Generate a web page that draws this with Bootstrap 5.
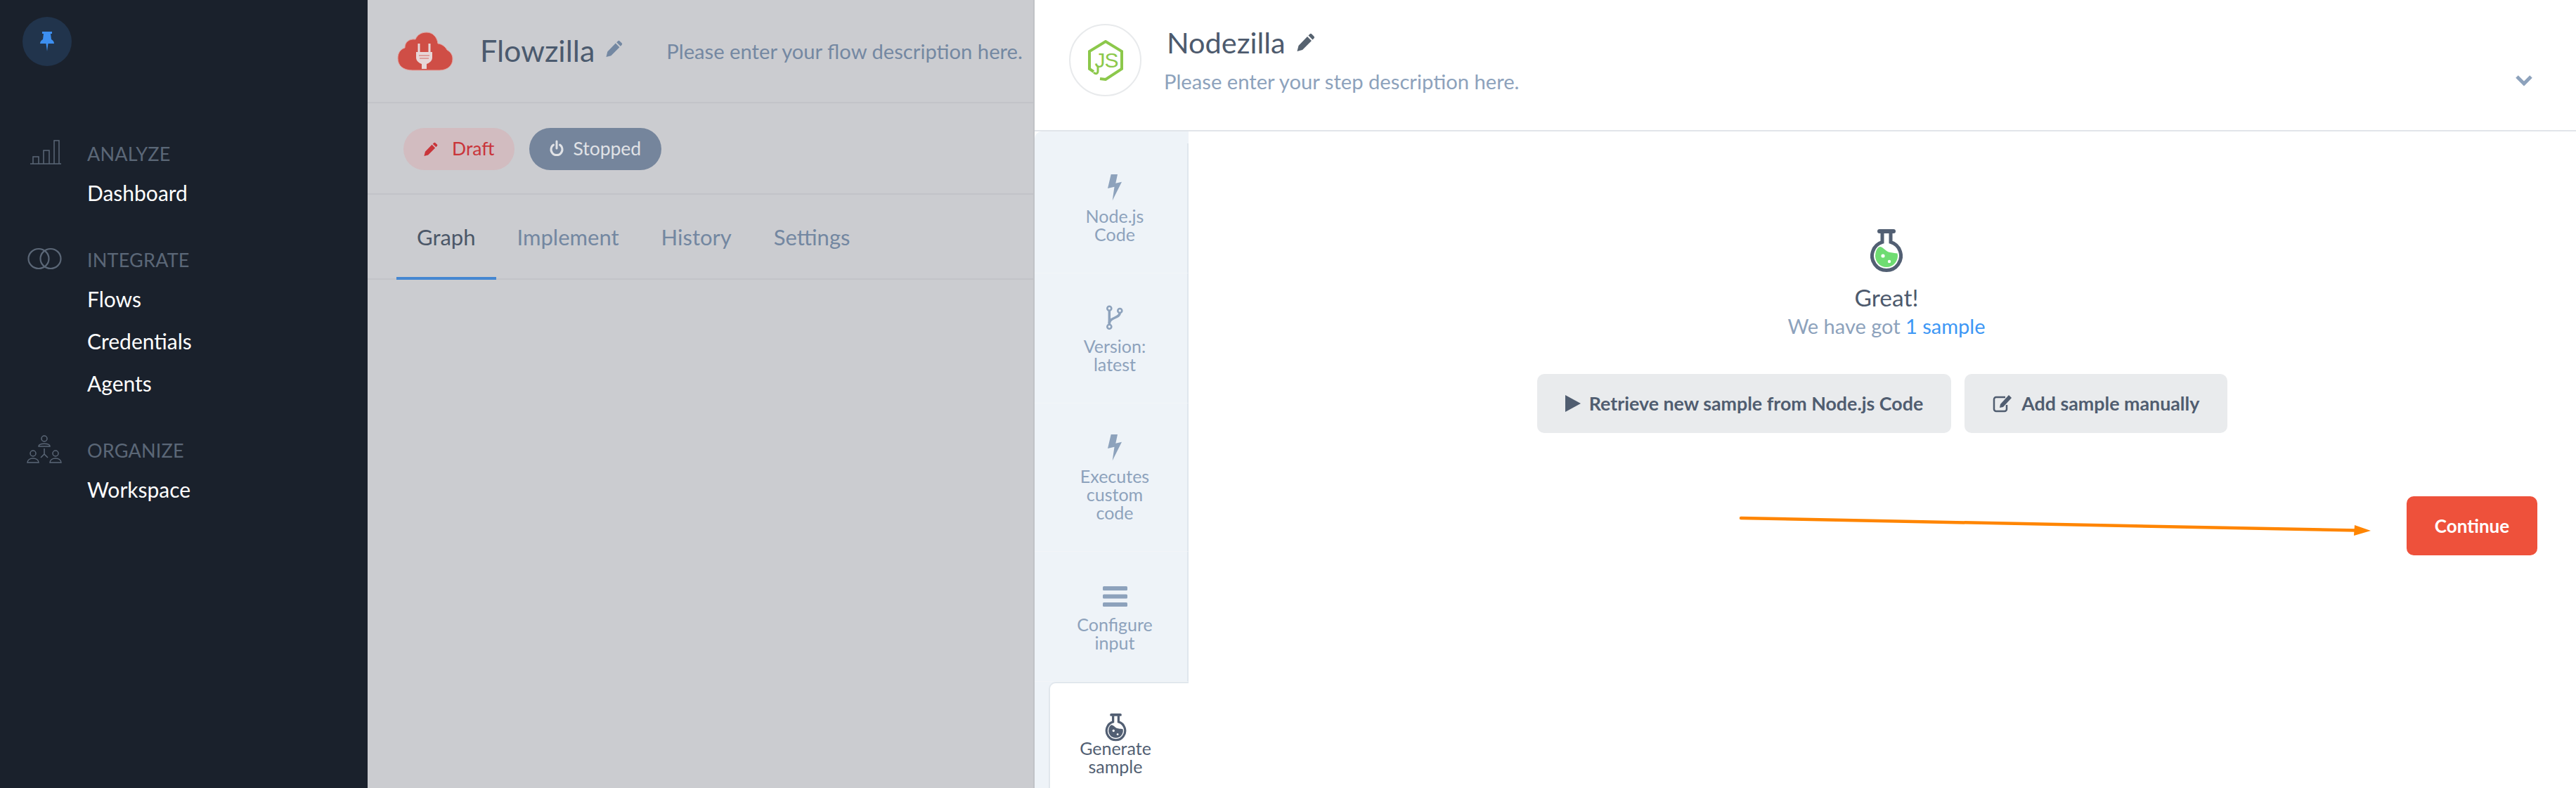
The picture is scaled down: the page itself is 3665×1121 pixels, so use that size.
<!DOCTYPE html>
<html lang="en">
<head>
  <meta charset="UTF-8" />
  <meta name="viewport" content="width=device-width, initial-scale=1" />
  <title>Flowzilla - Nodezilla</title>
  <link href="https://cdn.jsdelivr.net/npm/bootstrap@5.3.0/dist/css/bootstrap.min.css" rel="stylesheet" />
  <style>
    html, body { height: 100%; overflow: hidden; }
    body { font-family: Lato, "Noto Sans", sans-serif; background: #fff; }
    .app { height: 1121px; width: 3665px; }

    /* sidebar */
    .side { width: 523px; background: #1a212c; padding: 24px 0 0 32px; flex: none; }
    .pin-btn { width: 70px; height: 70px; background: #21344c; border-radius: 50%; margin-bottom: 100px; }
    .side-group { margin-bottom: 41px; margin-left: 6px; }
    .side-ico { width: 86px; height: 50px; padding-bottom: 5px; flex: none; }
    .side-label { height: 50px; line-height: 50px; font-size: 27px; color: #5b6777; letter-spacing: .2px; }
    .side-link { display: block; height: 60px; line-height: 60px; font-size: 30px; color: #fff; text-decoration: none; }

    /* flow page behind the panel */
    .flow { width: 947px; background: #cbccd0; flex: none; }
    .flow-head { height: 147px; padding-left: 42px; border-bottom: 2px solid #c2c3c8; }
    .flow-name { font-size: 43px; color: #4b5a6e; margin-left: 38px; }
    .flow-desc { font-size: 29.200px; color: #7488a2; margin-left: 62px; white-space: nowrap; }
    .flow-pills { height: 130px; padding: 2px 0 0 51px; gap: 21px; border-bottom: 2px solid #c2c3c8; }
    .pill-state { height: 60px; border-radius: 30px; font-size: 26.500px; gap: 13px; padding: 0 29px; }
    .pill-draft { background: #d2bcc0; color: #c9353a; gap: 20px; }
    .pill-stop { background: #75859c; color: #e0e2e6; }
    .flow-tabs { height: 121px; padding-left: 41px; border-bottom: 2px solid #c2c3c8; }
    .flow-tabs .nav-link { height: 121px; line-height: 121px; padding: 0 30px; font-size: 31px; color: #7387a1; }
    .flow-tabs .nav-link.active { color: #4b5768; border-bottom: 4px solid #4587d1; padding: 0 29px; }

    /* step panel */
    .panel { flex: 1; border-left: 2px solid #c0c2c6; background: #fff; position: relative; min-width: 0; }
    .panel-head { height: 187px; border-bottom: 2px solid #e1e5ea; padding: 34px 0 0 49px; position: relative; }
    .step-logo { width: 103px; height: 103px; border: 2px solid #e8eaec; border-radius: 50%; flex: none; }
    .step-name { font-size: 41.500px; line-height: 50px; color: #4d5a6d; margin-left: 4px; }
    .step-desc { font-size: 29.200px; line-height: 36px; color: #8da2bc; margin-top: 13px; }
    .step-text { margin-left: 32px; margin-top: -33px; padding-top: 34px; }
    .chev { position: absolute; right: 62px; top: 107px; }

    .rail { width: 219px; background: #eef3f8; padding-top: 17px; flex: none; border-top-left-radius: 10px; }
    .rail-step { padding: 41px 0 40px 11px; border-right: 2px solid #dfe6ed; border-bottom: 1px solid #f2f5f8; text-align: center; color: #8da2bc; font-size: 25px; line-height: 26px; }
    .rail-ico { height: 44px; }
    .rail-txt { margin-top: 5px; padding-bottom: 2px; }
    .rail-on { flex: 1; margin-left: 20px; padding: 41px 11px 0 0; background: #fff; border: 0; border-left: 2px solid #e1e7ed; border-top: 2px solid #e1e7ed; border-top-left-radius: 10px; color: #525f73; }
    .rail-on .rail-txt { margin-top: -6px; }

    .sample { flex: 1; padding-top: 139px; min-width: 0; }
    .sample-top { padding-left: 12px; }
    .great { font-size: 33.500px; line-height: 40px; color: #4d5a6d; margin-top: 15px; }
    .got { font-size: 29px; line-height: 36px; color: #8da2bc; margin-top: 3px; }
    .got span { color: #3d97f5; }
    .sample-btns { gap: 19px; margin-top: 50px; }
    .btn-soft { height: 84px; background: #e9ebed; border: 0; border-radius: 10px; color: #505d70; font-size: 26.800px; font-weight: 700; gap: 12px; padding: 0 40px; white-space: nowrap; }
    .btn-soft + .btn-soft { padding: 0 40px; gap: 13px; }
    .btn-next { width: 186px; height: 84px; background: #ee513b; border: 0; border-radius: 10px; color: #fff; font-size: 26px; font-weight: 700; padding: 0; }
    .next-row { margin: 90px 55px 0 0; }
    .arrow-note { position: absolute; left: 1000px; top: 730px; }
  </style>
</head>
<body>
  <svg width="0" height="0" class="position-absolute">
    <symbol id="bolt" viewBox="0 0 20 38"><polygon points="4.7,0 14,0 11.3,12.7 20,10.7 6.7,37.3 9.5,17.8 0,20" fill="currentColor" /></symbol>
    <symbol id="flask" viewBox="0 0 46 62">
      <path d="M13 3H33" fill="none" stroke="currentColor" stroke-width="6" stroke-linecap="round" />
      <path d="M17 5V18.4A20.5 20.5 0 1 0 29 18.4V5" fill="none" stroke="currentColor" stroke-width="5" />
      <path d="M7.400 34.500C8 30 11 25 14 25C19 26 22 32 28 33C33 34 36 34 38.600 34.500A16 16 0 1 1 7.400 34.500Z" fill="var(--liquid)" />
      <circle cx="18" cy="38" r="2.600" fill="#fff" />
      <circle cx="27" cy="46" r="2.200" fill="#fff" />
    </symbol>
    <symbol id="pencil" viewBox="0 0 26 26"><path d="M18.500 1.500a2 2 0 0 1 2.800 0l3.200 3.200a2 2 0 0 1 0 2.800l-2 2-6-6zM15 5l6 6L8 24l-7.500 2L2.500 18z" fill="currentColor" /></symbol>
  </svg>

  <div class="app d-flex">
    <aside class="side">
      <div class="pin-btn d-flex align-items-center justify-content-center">
        <svg width="20" height="28" viewBox="0 0 20 28"><path d="M3 0H17V3H15L16 11C18 12 20 14 20 17H11.500L10 28L8.500 17H0C0 14 2 12 4 11L5 3H3Z" fill="#3d8ff0" /></svg>
      </div>
      <div class="side-group d-flex">
        <div class="side-ico d-flex align-items-center">
          <svg class="ms-1" width="46" height="35" viewBox="0 0 46 35" fill="none" stroke="#5b6777" stroke-width="1.500"><path d="M1 34H45M5 34V24H13V34M20 34V15H28V34M35 34V1H42V34" /></svg>
        </div>
        <div>
          <div class="side-label">ANALYZE</div>
          <a class="side-link" href="#">Dashboard</a>
        </div>
      </div>
      <div class="side-group d-flex">
        <div class="side-ico d-flex align-items-center">
          <svg width="50" height="32" viewBox="0 0 50 32" fill="none" stroke="#5b6777" stroke-width="2.200"><ellipse cx="17" cy="16" rx="14.500" ry="14" /><ellipse cx="34" cy="16" rx="14.500" ry="14" /></svg>
        </div>
        <div>
          <div class="side-label">INTEGRATE</div>
          <a class="side-link" href="#">Flows</a>
          <a class="side-link" href="#">Credentials</a>
          <a class="side-link" href="#">Agents</a>
        </div>
      </div>
      <div class="side-group d-flex">
        <div class="side-ico d-flex align-items-center">
          <svg width="50" height="40" viewBox="0 0 50 40" fill="none" stroke="#5b6777" stroke-width="1.500"><circle cx="25" cy="5" r="4" /><path d="M17 16C17 11 33 11 33 16Z" /><circle cx="9" cy="26" r="4" /><path d="M1 39C1 31 17 31 17 39Z" /><circle cx="41" cy="26" r="4" /><path d="M33 39C33 31 49 31 49 39Z" /><path d="M25 19V27M25 27L20 32M25 27L30 32" /></svg>
        </div>
        <div>
          <div class="side-label">ORGANIZE</div>
          <a class="side-link" href="#">Workspace</a>
        </div>
      </div>
    </aside>

    <section class="flow">
      <div class="flow-head d-flex align-items-center">
        <svg width="80" height="56" viewBox="0 0 80 56">
          <path d="M22 55C8 55 1 48 1 38C1 30 5 25 11 23C11 15 17 10 26 11C29 4 35 1 42 1C51 1 57 8 58 17C61 17 68 20 71 26C76 29 79 33 79 39C79 48 72 55 60 55Z" fill="#cf4e46" stroke="#e2a5a2" stroke-width="1" />
          <path d="M31 17V29M46 17V29" stroke="#e7d7d8" stroke-width="3" />
          <path d="M27 29H50V37C50 42 45 45 42 46V53H35V46C32 45 27 42 27 37Z" fill="#e7d7d8" />
          <path d="M31 34H46M32 38H45" stroke="#dd9f9c" stroke-width="2" />
        </svg>
        <span class="flow-name">Flowzilla</span>
        <svg class="ms-3 mb-2" width="24" height="24" style="color:#7488a2"><use href="#pencil" /></svg>
        <span class="flow-desc">Please enter your flow description here.</span>
      </div>
      <div class="flow-pills d-flex align-items-center">
        <div class="pill-state pill-draft d-flex align-items-center">
          <svg width="20" height="20"><use href="#pencil" /></svg>Draft
        </div>
        <div class="pill-state pill-stop d-flex align-items-center">
          <svg width="20" height="26" viewBox="0 0 20 26" fill="none" stroke="currentColor" stroke-width="3" stroke-linecap="round"><path d="M10 2V12M5.500 7A8 8 0 1 0 14.500 7" /></svg>Stopped
        </div>
      </div>
      <nav class="nav flow-tabs">
        <a class="nav-link active" href="#">Graph</a>
        <a class="nav-link" href="#">Implement</a>
        <a class="nav-link" href="#">History</a>
        <a class="nav-link" href="#">Settings</a>
      </nav>
    </section>

    <section class="panel d-flex flex-column">
      <header class="panel-head d-flex">
        <div class="step-logo d-flex align-items-center justify-content-center">
          <svg width="52" height="58" viewBox="0 0 52 58">
            <path d="M18 55L26 56 49 41V16L26 2 3 16V41L9 45" fill="none" stroke="#8cc84b" stroke-width="4" />
            <path d="M15 38V44C15 48 12 49 9 46" fill="none" stroke="#8cc84b" stroke-width="3" />
            <text x="27" y="39" text-anchor="middle" font-family="Liberation Sans, sans-serif" font-size="30" letter-spacing="-1" fill="#8cc84b">JS</text>
          </svg>
        </div>
        <div class="step-text">
          <div class="d-flex align-items-center">
            <span class="step-name">Nodezilla</span>
            <svg class="ms-3" width="26" height="26" style="color:#56626f"><use href="#pencil" /></svg>
          </div>
          <div class="step-desc">Please enter your step description here.</div>
        </div>
        <svg class="chev" width="24" height="16" viewBox="0 0 24 16" fill="none" stroke="#8da2bc" stroke-width="5"><path d="M2 2L12 12L22 2" /></svg>
      </header>

      <div class="d-flex flex-grow-1">
        <div class="rail d-flex flex-column">
          <div class="rail-step">
            <div class="rail-ico d-flex align-items-center justify-content-center"><svg width="20" height="38"><use href="#bolt" /></svg></div>
            <div class="rail-txt">Node.js<br />Code</div>
          </div>
          <div class="rail-step">
            <div class="rail-ico d-flex align-items-center justify-content-center">
              <svg width="24" height="36" viewBox="0 0 24 36" fill="none" stroke="currentColor" stroke-width="2.600"><circle cx="4.300" cy="4.700" r="3" /><circle cx="19.300" cy="8" r="3" /><circle cx="4.300" cy="30.700" r="3" /><path d="M4.300 8V27.500" stroke-width="3.500" /><path d="M19.300 11C19.300 19 4.300 17 4.300 26" stroke-width="3.500" /></svg>
            </div>
            <div class="rail-txt">Version:<br />latest</div>
          </div>
          <div class="rail-step">
            <div class="rail-ico d-flex align-items-center justify-content-center"><svg width="20" height="38"><use href="#bolt" /></svg></div>
            <div class="rail-txt">Executes<br />custom<br />code</div>
          </div>
          <div class="rail-step">
            <div class="rail-ico d-flex align-items-center justify-content-center">
              <svg width="35" height="29" viewBox="0 0 35 29" fill="currentColor"><rect width="35" height="6" rx="1.500" /><rect y="11.500" width="35" height="6" rx="1.500" /><rect y="23" width="35" height="6" rx="1.500" /></svg>
            </div>
            <div class="rail-txt">Configure<br />input</div>
          </div>
          <div class="rail-step rail-on">
            <div class="rail-ico d-flex align-items-center justify-content-center"><svg width="31" height="40" style="--liquid:#525f73"><use href="#flask" /></svg></div>
            <div class="rail-txt">Generate<br />sample</div>
          </div>
        </div>

        <main class="sample d-flex flex-column align-items-center">
          <div class="sample-top d-flex flex-column align-items-center">
            <svg width="46" height="62" style="color:#525f73;--liquid:#6fdc72"><use href="#flask" /></svg>
            <div class="great">Great!</div>
            <div class="got">We have got <span>1 sample</span></div>
          </div>
          <div class="sample-btns d-flex">
            <button class="btn btn-soft d-flex align-items-center" type="button">
              <svg width="22" height="24" viewBox="0 0 22 24"><path d="M0 0L22 12L0 24Z" fill="currentColor" /></svg>Retrieve new sample from Node.js Code
            </button>
            <button class="btn btn-soft d-flex align-items-center" type="button">
              <svg width="28" height="26" viewBox="0 0 28 26" fill="none" stroke="currentColor" stroke-width="2.500"><path d="M18 4H5A3 3 0 0 0 2 7V21A3 3 0 0 0 5 24H17A3 3 0 0 0 20 21V15" /><path d="M23 1L27 5L15 18L10 19L11 14Z" fill="currentColor" stroke="none" /></svg>Add sample manually
            </button>
          </div>
          <div class="next-row align-self-end">
            <button class="btn btn-next" type="button">Continue</button>
          </div>
        </main>
      </div>

      <svg class="arrow-note" width="905" height="35" viewBox="0 0 905 35">
        <path d="M5 7L880 24.500" stroke="#ff8500" stroke-width="4.500" stroke-linecap="round" />
        <path d="M878 17L901 25L877 32Z" fill="#ff8500" />
      </svg>
    </section>
  </div>
  <script src="https://cdn.jsdelivr.net/npm/bootstrap@5.3.0/dist/js/bootstrap.bundle.min.js"></script>
</body>
</html>
